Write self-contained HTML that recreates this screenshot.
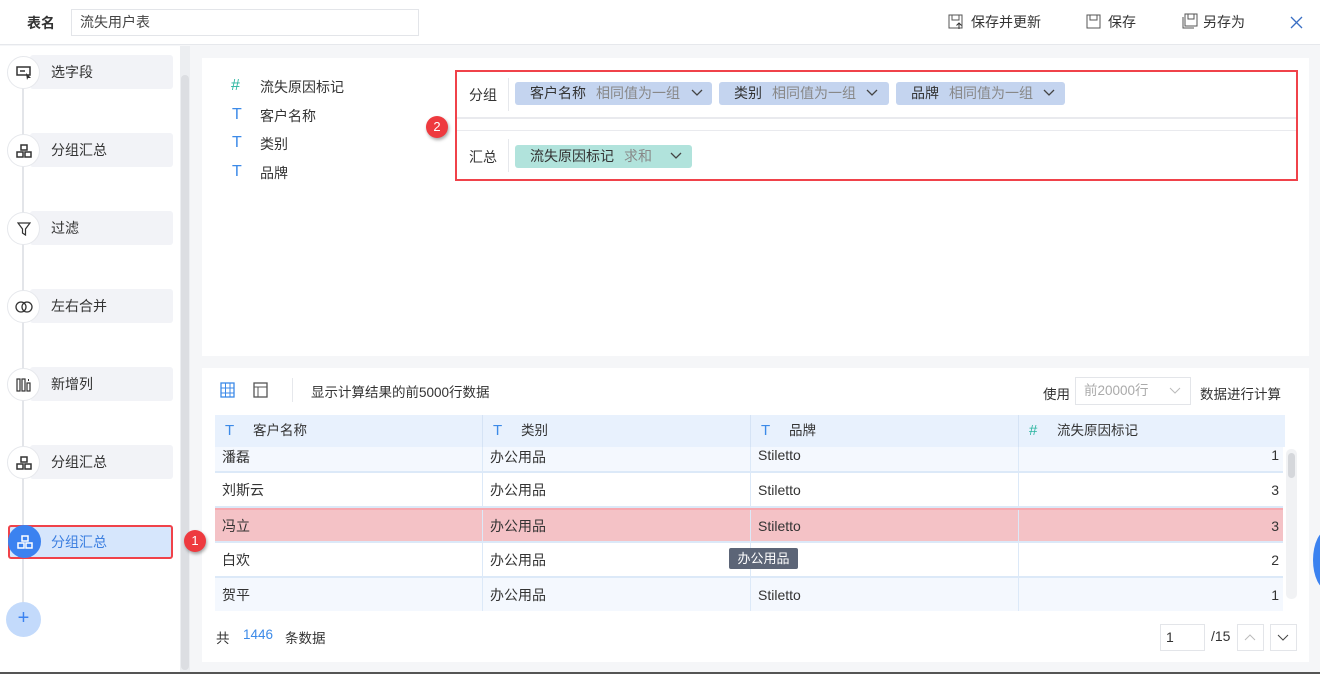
<!DOCTYPE html>
<html><head><meta charset="utf-8"><style>
*{box-sizing:border-box;margin:0;padding:0}
body{width:1320px;height:674px;overflow:hidden;position:relative;background:#f5f6f8;font-family:"Liberation Sans","Noto Sans CJK SC",sans-serif;font-size:14px;color:#333}
.a{position:absolute}
.hdr{left:0;top:0;width:1320px;height:45px;background:#fff;border-bottom:1px solid #e6e8ec}
.side{left:0;top:46px;width:180px;height:628px;background:#fff}
.item{position:absolute;left:30px;width:143px;height:34px;background:#f2f3f7;border-radius:3px;line-height:34px;padding-left:21px;color:#333}
.circ{position:absolute;left:7px;width:33px;height:33px;border-radius:50%;background:#fff;border:1px solid #e6e8ec;display:flex;align-items:center;justify-content:center}
.panel{background:#fff}
.tag{position:absolute;height:23px;border-radius:3px;line-height:23px;padding-left:15px;color:#333;font-size:14px}
.tag i{font-style:normal;color:#888;margin-left:10px}
.th{position:absolute;top:415px;height:32px;line-height:32px;background:#e8f1fd;border-right:1px solid #d5e3f5;padding-left:38px;color:#333;font-size:13.5px}
.th b{position:absolute;left:10px;font-weight:normal;color:#3c8ae8;font-size:15px}
.row{position:absolute;left:215px;width:1068px;border-bottom:2px solid #dce9f8}
.c{position:absolute;top:0;height:100%;border-right:1px solid #dce9f8;display:flex;align-items:center;padding-left:7px}
.fi{position:absolute;font-size:16px;line-height:20px}
</style></head><body>
<div class="a hdr">
 <div class="a" style="left:27px;top:13px;font-weight:bold;font-size:14px;color:#333">表名</div>
 <div class="a" style="left:71px;top:9px;width:348px;height:27px;border:1px solid #e3e5e9;padding-left:8px;line-height:25px;font-size:14px;color:#444">流失用户表</div>
 <svg class="a" style="left:948px;top:14px" width="16" height="16"><rect x="1" y="1" width="13" height="13" fill="none" stroke="#555"/><rect x="4" y="1" width="7" height="5" fill="none" stroke="#555"/><path d="M11 15V9M8.5 11.5L11 9L13.5 11.5" stroke="#333" fill="none"/></svg>
 <div class="a" style="left:971px;top:12px">保存并更新</div>
 <svg class="a" style="left:1086px;top:14px" width="16" height="16"><rect x="1" y="1" width="13" height="13" fill="none" stroke="#555"/><rect x="4" y="1" width="7" height="5" fill="none" stroke="#555"/></svg>
 <div class="a" style="left:1108px;top:12px">保存</div>
 <svg class="a" style="left:1181px;top:13px" width="17" height="17"><rect x="4" y="1" width="12" height="12" fill="none" stroke="#555"/><path d="M2 4V15H13" stroke="#555" fill="none"/><rect x="7" y="1" width="6" height="5" fill="none" stroke="#555"/></svg>
 <div class="a" style="left:1203px;top:12px">另存为</div>
 <svg class="a" style="left:1290px;top:16px" width="13" height="13"><path d="M1 1L12 12M12 1L1 12" stroke="#3a6fc4" stroke-width="1.3"/></svg>
</div>
<div class="a side">
 <div class="a" style="left:22px;top:10px;width:2px;height:560px;background:#e3e5e9"></div>
</div>
<div class="a" style="left:180px;top:46px;width:10px;height:628px;background:#eceef1"></div>
<div class="a" style="left:181px;top:75px;width:8px;height:595px;background:#dcdee2;border-radius:4px"></div>

<div class="item" style="top:55px">选字段</div><div class="circ" style="top:56px"><svg width="16" height="14"><rect x="1" y="1" width="13" height="8" fill="none" stroke="#333" stroke-width="1.5"/><path d="M4 5H9" stroke="#333" stroke-width="1.5"/><path d="M10 7L15 12L12 12L11 14Z" fill="#333"/></svg></div>
<div class="item" style="top:133px">分组汇总</div><div class="circ" style="top:134px"><svg width="16" height="14"><rect x="5" y="1" width="6" height="5" fill="none" stroke="#333" stroke-width="1.5"/><rect x="1" y="8" width="6" height="5" fill="none" stroke="#333" stroke-width="1.5"/><rect x="9" y="8" width="6" height="5" fill="none" stroke="#333" stroke-width="1.5"/></svg></div>
<div class="item" style="top:211px">过滤</div><div class="circ" style="top:212px"><svg width="14" height="14"><path d="M1 1H13L8.5 7V13L5.5 11V7Z" fill="none" stroke="#333" stroke-width="1.2"/></svg></div>
<div class="item" style="top:289px">左右合并</div><div class="circ" style="top:290px"><svg width="18" height="12"><rect x="1" y="1" width="10" height="10" rx="5" fill="none" stroke="#333" stroke-width="1.3"/><rect x="7" y="1" width="10" height="10" rx="5" fill="none" stroke="#333" stroke-width="1.3"/></svg></div>
<div class="item" style="top:367px">新增列</div><div class="circ" style="top:368px"><svg width="16" height="14"><rect x="1" y="1" width="3" height="12" fill="none" stroke="#333" stroke-width="1.2"/><rect x="6" y="1" width="3" height="12" fill="none" stroke="#333" stroke-width="1.2"/><rect x="11" y="5" width="3" height="8" fill="none" stroke="#333" stroke-width="1.2"/><path d="M12.5 1V3" stroke="#333"/></svg></div>
<div class="item" style="top:445px">分组汇总</div><div class="circ" style="top:446px"><svg width="16" height="14"><rect x="5" y="1" width="6" height="5" fill="none" stroke="#333" stroke-width="1.5"/><rect x="1" y="8" width="6" height="5" fill="none" stroke="#333" stroke-width="1.5"/><rect x="9" y="8" width="6" height="5" fill="none" stroke="#333" stroke-width="1.5"/></svg></div>
<div class="item" style="top:525px;left:8px;width:165px;height:34px;background:#d6e6fc;color:#3c7fe0;padding-left:41px;border:2px solid #f0424a;line-height:30px">分组汇总</div>
<div class="circ" style="top:525px;left:8px;background:#3b82f0;border-color:#3b82f0"><svg width="16" height="14"><rect x="5" y="1" width="6" height="5" fill="none" stroke="#fff" stroke-width="1.5"/><rect x="1" y="8" width="6" height="5" fill="none" stroke="#fff" stroke-width="1.5"/><rect x="9" y="8" width="6" height="5" fill="none" stroke="#fff" stroke-width="1.5"/></svg></div>
<div class="a" style="left:6px;top:602px;width:35px;height:35px;border-radius:50%;background:#c3dafb;color:#3b82f0;font-size:20px;text-align:center;line-height:33px">+</div>

<div class="a panel" style="left:202px;top:58px;width:1107px;height:298px"></div>
<div class="fi" style="left:231px;top:76px;color:#2bb5a0">#</div><div class="a" style="left:260px;top:77px">流失原因标记</div>
<div class="fi" style="left:232px;top:105px;color:#3c8ae8">T</div><div class="a" style="left:260px;top:106px">客户名称</div>
<div class="fi" style="left:232px;top:133px;color:#3c8ae8">T</div><div class="a" style="left:260px;top:134px">类别</div>
<div class="fi" style="left:232px;top:162px;color:#3c8ae8">T</div><div class="a" style="left:260px;top:163px">品牌</div>
<div class="a" style="left:426px;top:116px;width:22px;height:22px;border-radius:50%;background:#ee3a3f;color:#fff;font-size:13px;text-align:center;line-height:22px;box-shadow:1px 2px 3px rgba(0,0,0,.35)">2</div>
<div class="a" style="left:455px;top:70px;width:843px;height:111px;border:2px solid #f0424a"></div>
<div class="a" style="left:457px;top:117px;width:839px;height:2px;background:#e9eaee"></div>
<div class="a" style="left:457px;top:130px;width:839px;height:1px;background:#e9eaee"></div>
<div class="a" style="left:508px;top:78px;width:1px;height:33px;background:#e6e8ec"></div>
<div class="a" style="left:508px;top:139px;width:1px;height:33px;background:#e6e8ec"></div>
<div class="a" style="left:469px;top:85px">分组</div><div class="a" style="left:469px;top:147px">汇总</div>
<div class="tag" style="left:515px;top:82px;width:197px;background:#c4d4ef">客户名称<i>相同值为一组</i></div>
<div class="tag" style="left:719px;top:82px;width:170px;background:#c4d4ef">类别<i>相同值为一组</i></div>
<div class="tag" style="left:896px;top:82px;width:169px;background:#c4d4ef">品牌<i>相同值为一组</i></div>
<div class="tag" style="left:515px;top:145px;width:177px;background:#b1e3dc">流失原因标记<i>求和</i></div>
<svg class="a" style="left:691px;top:89px" width="12" height="8"><path d="M1 1L6 6L11 1" stroke="#444" fill="none" stroke-width="1.3"/></svg>
<svg class="a" style="left:866px;top:89px" width="12" height="8"><path d="M1 1L6 6L11 1" stroke="#444" fill="none" stroke-width="1.3"/></svg>
<svg class="a" style="left:1043px;top:89px" width="12" height="8"><path d="M1 1L6 6L11 1" stroke="#444" fill="none" stroke-width="1.3"/></svg>
<svg class="a" style="left:670px;top:152px" width="12" height="8"><path d="M1 1L6 6L11 1" stroke="#444" fill="none" stroke-width="1.3"/></svg>

<div class="a panel" style="left:202px;top:368px;width:1107px;height:294px"></div>
<svg class="a" style="left:220px;top:382px" width="15" height="16"><rect x="1" y="1" width="13" height="14" fill="none" stroke="#3c8ae8" stroke-width="1.3"/><path d="M1 6H14M1 11H14M5.5 1V15M10 1V15" stroke="#3c8ae8"/></svg>
<svg class="a" style="left:253px;top:382px" width="15" height="16"><rect x="1" y="1" width="13" height="14" fill="none" stroke="#555" stroke-width="1.3"/><path d="M1 5H14M5 5V15" stroke="#555"/></svg>
<div class="a" style="left:292px;top:378px;width:1px;height:24px;background:#e6e8ec"></div>
<div class="a" style="left:311px;top:381px;font-size:13.5px">显示计算结果的前5000行数据</div>
<div class="a" style="left:1043px;top:383px;font-size:13.5px">使用</div>
<div class="a" style="left:1075px;top:377px;width:116px;height:28px;border:1px solid #e3e5e9;padding-left:8px;line-height:26px;color:#aaa;font-size:13.5px">前20000行</div>
<svg class="a" style="left:1169px;top:387px" width="12" height="8"><path d="M1 1L6 6L11 1" stroke="#bbb" fill="none"/></svg>
<div class="a" style="left:1200px;top:383px;font-size:13.5px">数据进行计算</div>

<div class="th" style="left:215px;width:268px"><b>T</b>客户名称</div>
<div class="th" style="left:483px;width:268px"><b>T</b>类别</div>
<div class="th" style="left:751px;width:268px"><b>T</b>品牌</div>
<div class="th" style="left:1019px;width:266px;border-right:none"><b style="color:#2bb5a0">#</b>流失原因标记</div>

<div class="row" style="top:447px;height:26px;background:#f4f8fe"><div class="c" style="left:0;width:268px;align-items:flex-start">潘磊</div><div class="c" style="left:268px;width:268px;align-items:flex-start">办公用品</div><div class="c" style="left:536px;width:268px;align-items:flex-start">Stiletto</div><div class="c" style="left:804px;width:264px;justify-content:flex-end;padding-right:4px;align-items:flex-start;border:none">1</div></div>
<div class="row" style="top:473px;height:35px;background:#fff"><div class="c" style="left:0;width:268px">刘斯云</div><div class="c" style="left:268px;width:268px">办公用品</div><div class="c" style="left:536px;width:268px">Stiletto</div><div class="c" style="left:804px;width:264px;justify-content:flex-end;padding-right:4px;border:none">3</div></div>
<div class="row" style="top:508px;height:35px;background:#f4c2c6;border-top:2px solid #f7a9b0"><div class="c" style="left:0;width:268px">冯立</div><div class="c" style="left:268px;width:268px">办公用品</div><div class="c" style="left:536px;width:268px">Stiletto</div><div class="c" style="left:804px;width:264px;justify-content:flex-end;padding-right:4px;border:none">3</div></div>
<div class="row" style="top:543px;height:35px;background:#fff"><div class="c" style="left:0;width:268px">白欢</div><div class="c" style="left:268px;width:268px">办公用品</div><div class="c" style="left:536px;width:268px"></div><div class="c" style="left:804px;width:264px;justify-content:flex-end;padding-right:4px;border:none">2</div></div>
<div class="row" style="top:578px;height:33px;background:#f4f8fe;border:none"><div class="c" style="left:0;width:268px">贺平</div><div class="c" style="left:268px;width:268px">办公用品</div><div class="c" style="left:536px;width:268px">Stiletto</div><div class="c" style="left:804px;width:264px;justify-content:flex-end;padding-right:4px;border:none">1</div></div>
<div class="a" style="left:729px;top:548px;width:69px;height:21px;background:#5c6577;color:#fff;border-radius:2px;text-align:center;line-height:21px;font-size:13px">办公用品</div>
<div class="a" style="left:1286px;top:449px;width:11px;height:150px;background:#f1f2f4;border-radius:5px"></div>
<div class="a" style="left:1288px;top:453px;width:7px;height:25px;background:#d5d7db;border-radius:4px"></div>

<div class="a" style="left:216px;top:627px;font-size:13.5px">共</div>
<div class="a" style="left:243px;top:627px;color:#3c8ae8;font-size:13.5px">1446</div>
<div class="a" style="left:285px;top:627px;font-size:13.5px">条数据</div>
<div class="a" style="left:1160px;top:624px;width:45px;height:27px;border:1px solid #e3e5e9;padding-left:5px;line-height:25px">1</div>
<div class="a" style="left:1211px;top:628px">/15</div>
<div class="a" style="left:1237px;top:624px;width:27px;height:27px;border:1px solid #e3e5e9"></div>
<svg class="a" style="left:1244px;top:633px" width="12" height="8"><path d="M1 7L6 2L11 7" stroke="#bbb" fill="none"/></svg>
<div class="a" style="left:1270px;top:624px;width:27px;height:27px;border:1px solid #e3e5e9"></div>
<svg class="a" style="left:1277px;top:634px" width="12" height="8"><path d="M1 1L6 6L11 1" stroke="#444" fill="none"/></svg>
<div class="a" style="left:1313px;top:530px;width:30px;height:60px;border-radius:50%;background:#3b82f0"></div>
<div class="a" style="left:184px;top:530px;width:22px;height:22px;border-radius:50%;background:#ee3a3f;color:#fff;font-size:13px;text-align:center;line-height:22px;box-shadow:1px 2px 3px rgba(0,0,0,.35)">1</div>
<div class="a" style="left:0;top:672px;width:1320px;height:2px;background:#555"></div>
</body></html>
